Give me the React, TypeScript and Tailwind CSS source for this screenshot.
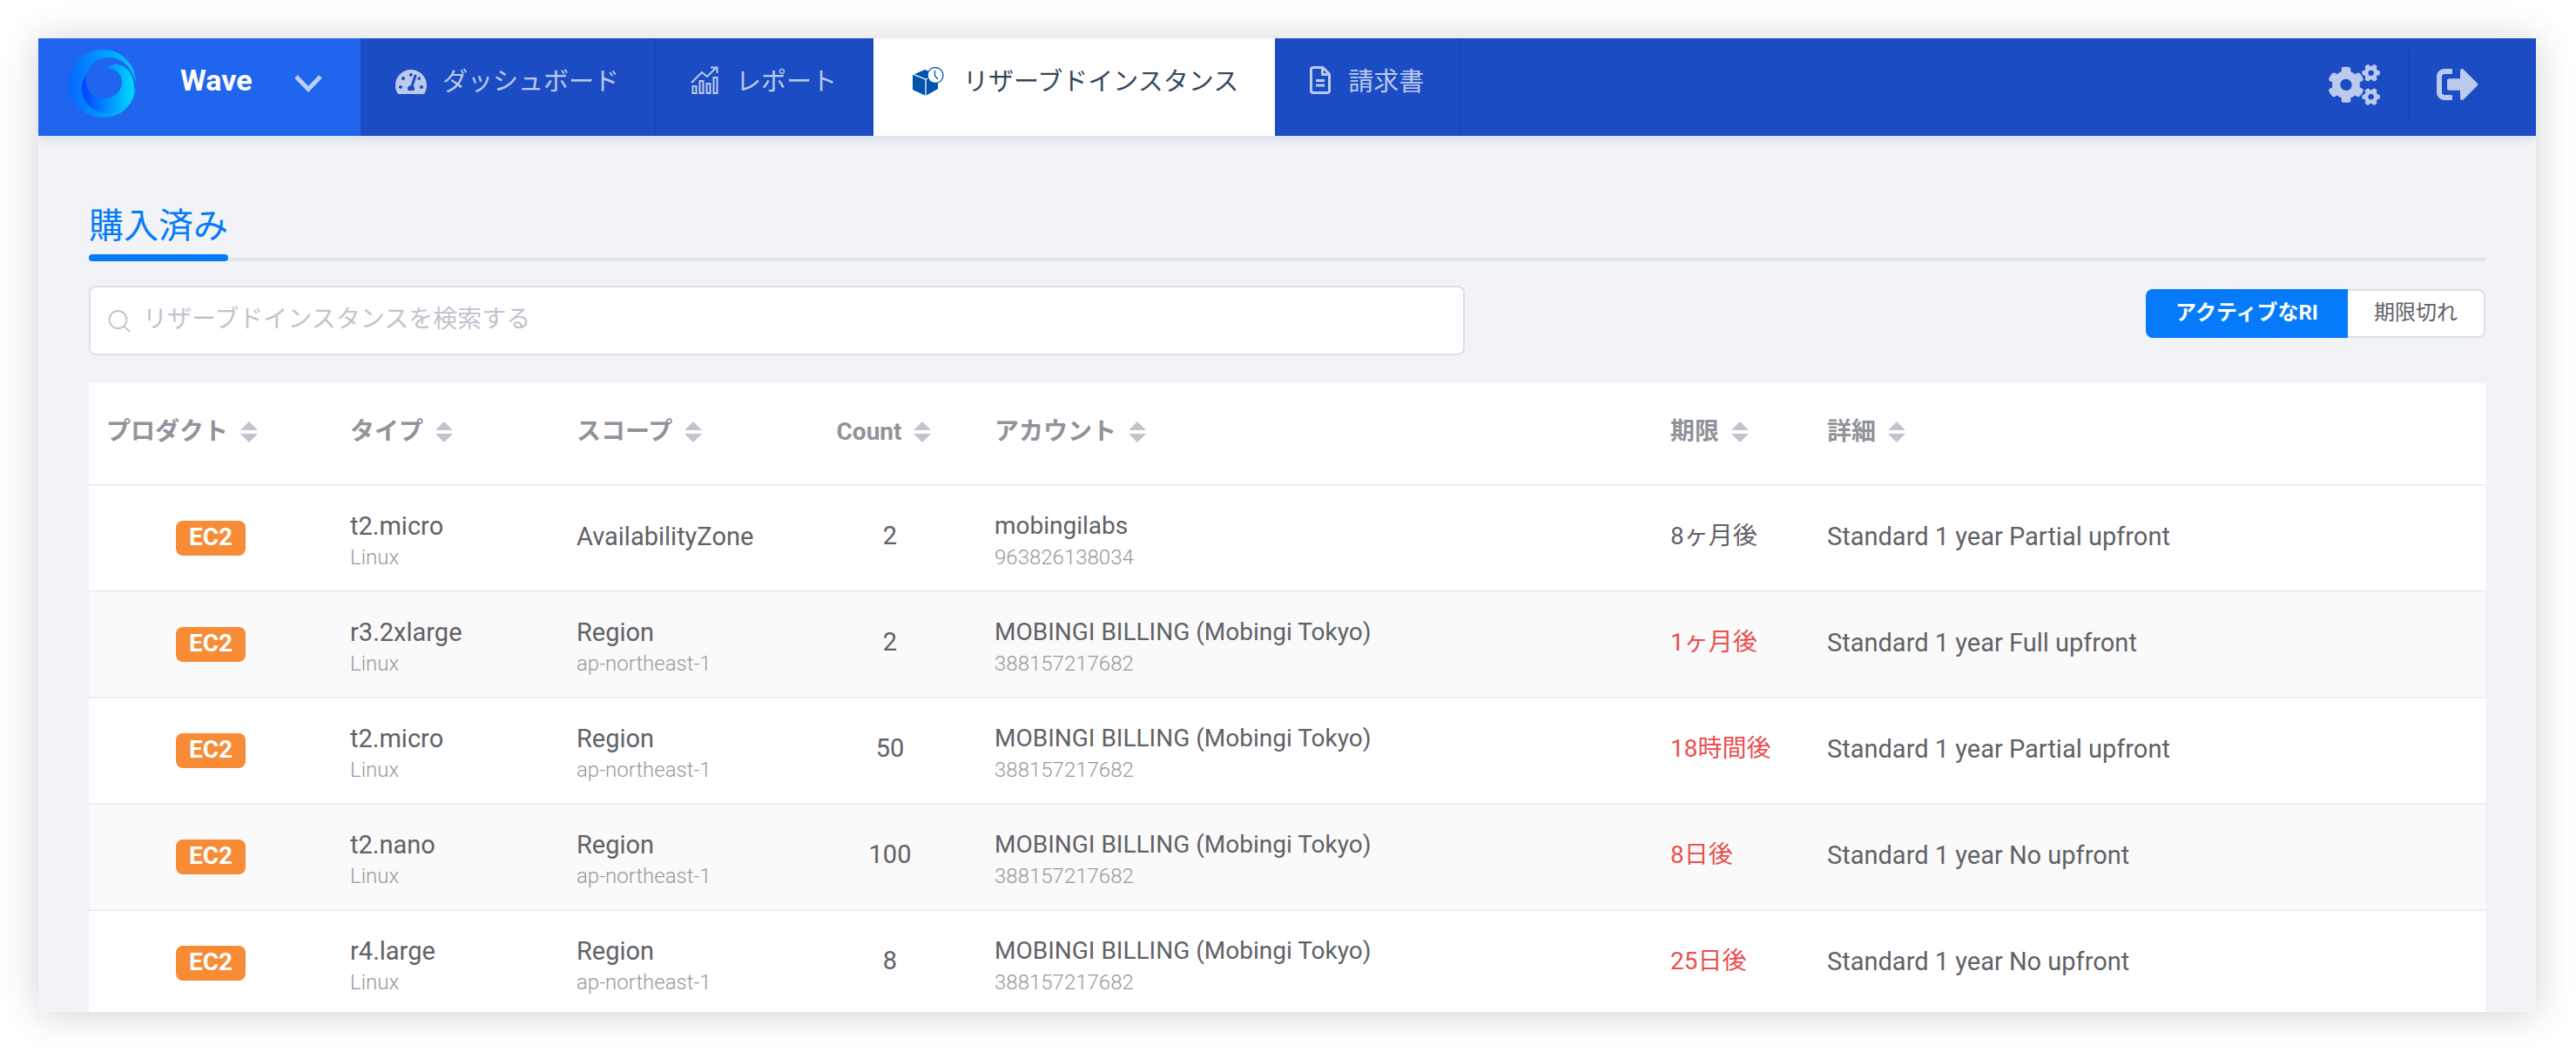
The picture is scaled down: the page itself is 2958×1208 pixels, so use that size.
import type { ReactNode } from "react";
import { FaCogs, FaSignOutAlt, FaTachometerAlt } from "react-icons/fa";

type Row = {
  type: string;
  scope: string;
  zone?: string;
  count: number;
  account: string;
  accountId: string;
  expiry: string;
  urgent: boolean;
  detail: string;
};

const billing = { account: "MOBINGI BILLING (Mobingi Tokyo)", accountId: "388157217682" };
const region = { scope: "Region", zone: "ap-northeast-1" };

const rows: Row[] = [
  { type: "t2.micro", scope: "AvailabilityZone", count: 2, account: "mobingilabs", accountId: "963826138034", expiry: "8ヶ月後", urgent: false, detail: "Standard 1 year Partial upfront" },
  { type: "r3.2xlarge", ...region, count: 2, ...billing, expiry: "1ヶ月後", urgent: true, detail: "Standard 1 year Full upfront" },
  { type: "t2.micro", ...region, count: 50, ...billing, expiry: "18時間後", urgent: true, detail: "Standard 1 year Partial upfront" },
  { type: "t2.nano", ...region, count: 100, ...billing, expiry: "8日後", urgent: true, detail: "Standard 1 year No upfront" },
  { type: "r4.large", ...region, count: 8, ...billing, expiry: "25日後", urgent: true, detail: "Standard 1 year No upfront" },
];

const columns = [
  { label: "プロダクト", width: "w-[280px]", center: false },
  { label: "タイプ", width: "w-[260px]", center: false },
  { label: "スコープ", width: "w-[280px]", center: false },
  { label: "Count", width: "w-[200px]", center: true },
  { label: "アカウント", width: "", center: false },
  { label: "期限", width: "w-[180px]", center: false },
  { label: "詳細", width: "", center: false },
];

function Logo() {
  return (
    <svg viewBox="0 0 78 78" className="h-[78px] w-[78px]" aria-hidden="true">
      <defs>
        <linearGradient id="ring" x1="0" x2="1">
          <stop offset="0" stopColor="#0567ff" />
          <stop offset="1" stopColor="#00ccff" />
        </linearGradient>
        <linearGradient id="curl" x1="0" x2="1">
          <stop offset="0" stopColor="#0040ff" />
          <stop offset="1" stopColor="#00dcff" />
        </linearGradient>
      </defs>
      <path
        d="M39 0C60 0 76 16 77 37C71 18 60 9 47 9C32 9 22 18 19 32C15 54 27 73 44 73C60 73 72 60 77 42C76 63 60 78 39 78C17 78 0 61 0 39S17 0 39 0Z"
        fill="url(#ring)"
      />
      <path
        d="M42 22C47 18 51 17 54 17C66 17 75 29 75 43C75 60 62 73 44 73C27 73 15 60 15 44C15 38 17 34 19 30C19 47 28 56 41 56C52 56 61 48 61 37C61 27 52 20 42 22Z"
        fill="url(#curl)"
      />
    </svg>
  );
}

function ReportIcon() {
  return (
    <svg viewBox="0 0 32 32" className="h-8 w-8" fill="none" stroke="currentColor" strokeWidth="2" aria-hidden="true">
      <path d="M1 19L13 7L19 12L29 2" />
      <path d="M23 1.500H30.500V8" />
      <rect x="2.500" y="23" width="4" height="8" />
      <rect x="10.500" y="17" width="4" height="14" />
      <rect x="18.500" y="20" width="4" height="11" />
      <rect x="26.500" y="13" width="4" height="18" />
    </svg>
  );
}

function ReservedIcon() {
  return (
    <svg viewBox="0 0 36 34" className="h-[34px] w-9" aria-hidden="true">
      <path d="M0 9L14 3L29 9V25L15 33L0 26Z" fill="#0153b0" />
      <path d="M0 8L15 14L26 9M15 14V33" fill="none" stroke="#fff" strokeWidth="1.300" />
      <circle cx="26" cy="9.500" r="9" fill="#fff" stroke="#0153b0" strokeWidth="1.300" />
      <path d="M25.500 4V10L29 14" fill="none" stroke="#0153b0" strokeWidth="1.300" />
    </svg>
  );
}

function InvoiceIcon() {
  return (
    <svg viewBox="0 0 24 32" className="h-8 w-6" fill="none" stroke="currentColor" strokeWidth="3" strokeLinejoin="round" aria-hidden="true">
      <path d="M4 1.500H15L22.500 9V28Q22.500 30.500 20 30.500H4Q1.500 30.500 1.500 28V4Q1.500 1.500 4 1.500Z" />
      <path d="M14.500 2V9.500H22M7 16.500H17M7 22H17" />
    </svg>
  );
}

function SortCarets() {
  return (
    <svg viewBox="0 0 20 24" className="mx-3.5 h-6 w-5 shrink-0" fill="#c0c4cc" aria-hidden="true">
      <path d="M0 10L10 0L20 10ZM0 14L10 24L20 14Z" />
    </svg>
  );
}

function NavItem({ icon, label, active = false }: { icon: ReactNode; label: string; active?: boolean }) {
  return (
    <a
      href="#"
      aria-current={active ? "page" : undefined}
      className={
        "flex items-center border-r-2 px-10 pb-3 text-[29px] leading-10 whitespace-nowrap " +
        (active ? "border-white bg-white text-[#34495e]" : "border-[#1a47b5] text-[#bbcaed]")
      }
    >
      {icon}
      {label}
    </a>
  );
}

function Cell({ main, sub, className = "text-[29px]" }: { main: string; sub?: string; className?: string }) {
  return (
    <td className="px-5">
      <div className={(sub ? "leading-11 " : "pb-1 leading-10 ") + className}>{main}</div>
      {sub && <div className="text-2xl leading-7 font-light text-[#999]">{sub}</div>}
    </td>
  );
}

export default function App() {
  return (
    <div
      lang="ja"
      className="flex h-screen bg-white pt-11 pr-[46px] pb-[46px] pl-11 font-[Roboto,'Noto_Sans_CJK_JP',sans-serif] text-[28px] text-[#606266]"
    >
      <div className="flex min-w-0 flex-1 flex-col overflow-hidden bg-[#f2f3f7] shadow-[0_2px_40px_rgba(0,0,0,0.18)]">
        <header className="relative z-10 flex h-28 shrink-0 bg-[#1c4cc3] shadow-[0_2px_12px_rgba(28,76,140,0.16)]">
          <button type="button" className="flex w-[370px] items-center bg-[#1f65ee] pb-2 pl-[35px] text-white">
            <Logo />
            <span className="ml-[50px] pb-2 text-[34px] leading-10 font-bold">Wave</span>
            <svg viewBox="0 0 32 21" className="ml-[48px] h-[21px] w-8" fill="none" stroke="#bcd0fa" strokeWidth="5" aria-hidden="true">
              <path d="M2 2L16 16.500L30 2" />
            </svg>
          </button>
          <nav className="flex">
            <NavItem icon={<FaTachometerAlt className="mr-[18px] h-8 w-9" />} label="ダッシュボード" />
            <NavItem icon={<span className="mr-5 pb-1"><ReportIcon /></span>} label="レポート" />
            <NavItem active icon={<span className="mr-[22px] ml-[5px]"><ReservedIcon /></span>} label="リザーブドインスタンス" />
            <NavItem icon={<span className="mr-5 pb-1"><InvoiceIcon /></span>} label="請求書" />
          </nav>
          <div className="ml-auto flex items-center pb-1.5 text-[#bbcaed]">
            <button type="button" aria-label="設定" className="px-8">
              <FaCogs className="h-[47px] w-[59px]" />
            </button>
            <span className="h-[78px] w-0.5 bg-[#1a43ac]" />
            <button type="button" aria-label="ログアウト" className="pr-[66px] pl-[31px]">
              <FaSignOutAlt className="h-12 w-12" />
            </button>
          </div>
        </header>

        <main className="px-[58px] pt-[68px]">
          <div role="tablist" className="flex h-[76px] border-b-4 border-[#e2e5ec]">
            <button
              type="button"
              role="tab"
              aria-selected="true"
              className="relative text-[40px] leading-[64px] text-[#057bfb] after:absolute after:inset-x-0 after:-bottom-1 after:h-2 after:rounded-full after:bg-[#057bfb]"
            >
              購入済み
            </button>
          </div>

          <div className="mt-7 flex items-start justify-between gap-8">
            <div className="relative w-full max-w-[1580px]">
              <svg viewBox="0 0 26 26" className="absolute top-7 left-[22px] h-[26px] w-[26px]" fill="none" stroke="#c0c4cc" strokeWidth="1.800" aria-hidden="true">
                <circle cx="11.500" cy="11" r="10" />
                <path d="M18 18L25 25" />
              </svg>
              <input
                type="search"
                aria-label="リザーブドインスタンスを検索する"
                placeholder="リザーブドインスタンスを検索する"
                className="block h-20 w-full rounded-lg border-2 border-[#dcdfe6] bg-white pr-6 pb-1 pl-[60px] placeholder:text-[#c0c4cc]"
              />
            </div>
            <div className="mt-1 flex shrink-0 text-2xl">
              <button type="button" className="h-14 w-[232px] rounded-l-lg bg-[#057bfb] pb-0.5 font-bold text-white">アクティブなRI</button>
              <button type="button" className="h-14 w-[158px] rounded-r-lg border-y-2 border-r-2 border-[#dcdfe6] bg-white pb-0.5">期限切れ</button>
            </div>
          </div>

          <table className="mt-8 w-full table-fixed border-collapse bg-white text-left">
            <thead>
              <tr className="h-[117px] border-b-2 border-[#ebeef5] text-[#909399]">
                {columns.map((c) => (
                  <th key={c.label} scope="col" className={"px-5 pb-1 font-bold " + c.width}>
                    <button type="button" className={"flex items-center leading-10 whitespace-nowrap" + (c.center ? " mx-auto" : "")}>
                      {c.label}
                      <SortCarets />
                    </button>
                  </th>
                ))}
              </tr>
            </thead>
            <tbody>
              {rows.map((r, i) => (
                <tr key={i} className="h-[122px] border-b-2 border-[#ebeef5] even:bg-[#fafafa]">
                  <td className="px-5">
                    <span className="mx-auto block h-10 w-20 rounded-lg bg-[#f78b36] text-center text-[28px] leading-[38px] font-bold text-white">EC2</span>
                  </td>
                  <Cell main={r.type} sub="Linux" />
                  <Cell main={r.scope} sub={r.zone} />
                  <td className="px-5 pb-1 text-center text-[29px]">{r.count}</td>
                  <Cell main={r.account} sub={r.accountId} className="text-[28px]" />
                  <td className={"px-5 pb-1 whitespace-nowrap " + (r.urgent ? "text-[#eb4f4f]" : "")}>{r.expiry}</td>
                  <Cell main={r.detail} />
                </tr>
              ))}
            </tbody>
          </table>
        </main>
      </div>
    </div>
  );
}
